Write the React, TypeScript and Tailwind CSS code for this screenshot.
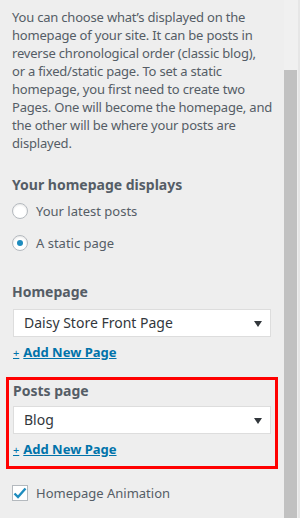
import React from "react"

function Radio({ checked, label }: { checked?: boolean; label: string }) {
  return (
    <label className="flex items-center gap-[8px] h-[18px]">
      <span className="w-[16px] h-[16px] rounded-full border border-[#b4b9be] bg-white shadow-[inset_0_1px_2px_rgba(0,0,0,0.1)] flex items-center justify-center">
        {checked && <span className="w-[6px] h-[6px] rounded-full bg-[#1e8cbe]" />}
      </span>
      <span className="text-[#555d66]">{label}</span>
    </label>
  )
}

function Select({ value }: { value: string }) {
  return (
    <div className="h-[28px] w-[258px] bg-white border border-[#dddddd] flex items-center justify-between pl-[10px] pr-[8px]">
      <span className="text-[14px] text-[#32373c]">{value}</span>
      <svg width="8" height="6" viewBox="0 0 8 6" className="mt-[1px]">
        <path d="M0 0 H8 L4 6 Z" fill="#32373c" />
      </svg>
    </div>
  )
}

function AddNew() {
  return (
    <a className="inline-flex items-baseline gap-[4px] text-[#0073aa] underline font-bold text-[13px] mt-[6px]">
      <span className="font-normal text-[11px]">+</span>
      <span>Add New Page</span>
    </a>
  )
}

export default function App() {
  return (
    <div
      className="w-[300px] h-[518px] bg-[#eeeeee] flex overflow-hidden text-[13px] leading-[18px]"
      style={{ fontFamily: '"Noto Sans", "Open Sans", sans-serif' }}
    >
      <div className="w-[284px] flex flex-col">
        <p className="ml-[12px] w-[268px] pt-[8px] text-[#555d66] tracking-[-0.2px]">
          You can choose what’s displayed on the
          <br />
          homepage of your site. It can be posts in
          <br />
          reverse chronological order (classic blog),
          <br />
          or a fixed/static page. To set a static
          <br />
          homepage, you first need to create two
          <br />
          Pages. One will become the homepage, and
          <br />
          the other will be where your posts are
          <br />
          displayed.
        </p>

        <h3 className="pl-[12px] mt-[24px] font-bold text-[14px] text-[#555d66]">Your homepage displays</h3>
        <div className="pl-[12px] mt-[8px] flex flex-col gap-[14px]">
          <Radio label="Your latest posts" />
          <Radio checked label="A static page" />
        </div>

        <h3 className="pl-[12px] mt-[31px] font-bold text-[14px] text-[#555d66]">Homepage</h3>
        <div className="pl-[13px] mt-[8px]">
          <Select value="Daisy Store Front Page" />
          <AddNew />
        </div>

        <div className="ml-[6px] mt-[15px] w-[272px] border-[3px] border-[#ff0000] pl-[4px] pt-[2px] pb-[7px]">
          <h3 className="font-bold text-[14px] text-[#555d66]">Posts page</h3>
          <div className="mt-[6px]">
            <Select value="Blog" />
            <AddNew />
          </div>
        </div>

        <label className="pl-[12px] mt-[15px] flex items-center gap-[8px]">
          <span className="w-[16px] h-[16px] border border-[#b4b9be] bg-white flex items-center justify-center">
            <svg width="14" height="12" viewBox="0 0 14 12">
              <path d="M1.5 6.5 L5 10 L12.5 1.5" fill="none" stroke="#1e8cbe" strokeWidth="2.4" />
            </svg>
          </span>
          <span className="text-[#555d66]">Homepage Animation</span>
        </label>
      </div>

      <div className="w-[16px] bg-[#f0f0f0] border-r-2 border-[#e6e6e6] flex flex-col">
        <div className="h-[70px]" />
        <div className="flex-1 w-[13px] bg-[#c1c1c1]" />
      </div>
    </div>
  )
}
